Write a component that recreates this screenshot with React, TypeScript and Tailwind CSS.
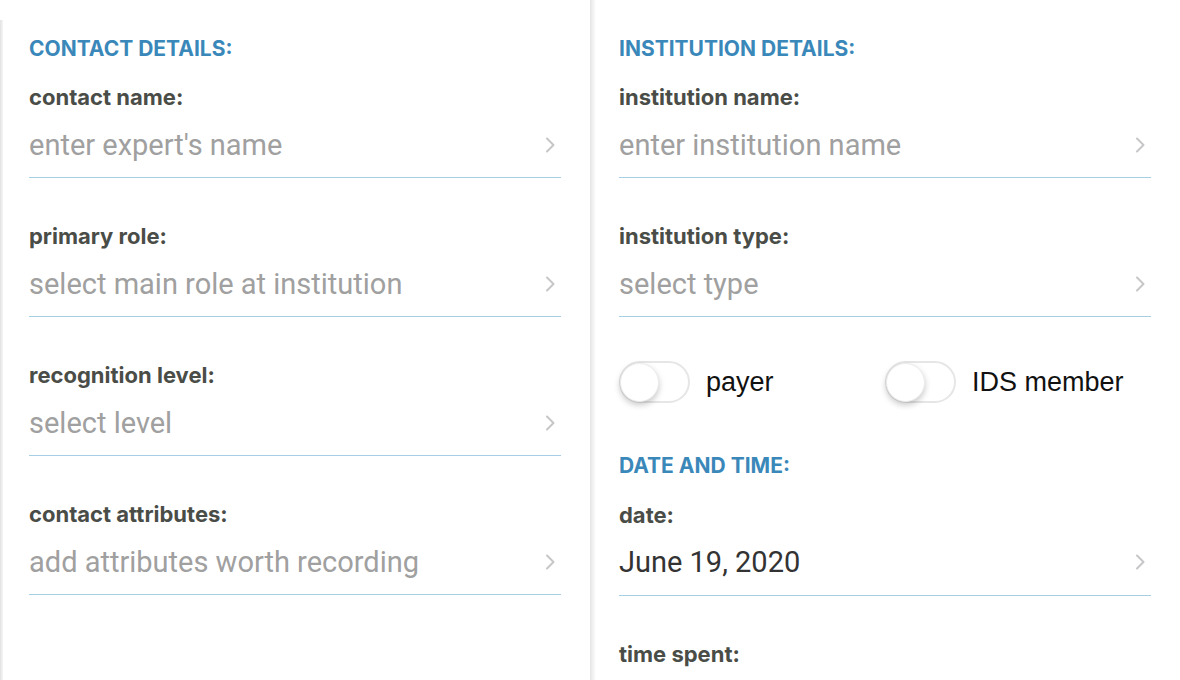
import React from "react";

const Chevron = () => (
  <svg width="12" height="18" viewBox="0 0 12 18" fill="none">
    <path d="M3 2.5 L9.5 9 L3 15.5" stroke="#c6c6c8" strokeWidth="2" strokeLinecap="round" strokeLinejoin="round" />
  </svg>
);

const Heading = ({ children, className = "" }: { children: React.ReactNode; className?: string }) => (
  <div className={`text-[21px] leading-[24px] font-bold text-[#3a88b9] ${className}`} style={{ fontFamily: "Inter, sans-serif" }}>
    {children}
  </div>
);

const Label = ({ children, className = "" }: { children: React.ReactNode; className?: string }) => (
  <div className={`text-[22px] leading-[26px] font-bold text-[#4a4d47] ${className}`} style={{ fontFamily: "Inter, sans-serif" }}>
    {children}
  </div>
);

const Field = ({ label, value, filled = false, className = "" }: { label: string; value: string; filled?: boolean; className?: string }) => (
  <div className={className}>
    <Label>{label}</Label>
    <div className="mt-[18px] flex items-center justify-between pb-[15px] border-b border-[#a6cfe4]">
      <span
        className={`text-[29px] leading-[34px] ${filled ? "text-[#333333]" : "text-[#a0a0a0]"}`}
        style={{ fontFamily: "Roboto, sans-serif" }}
      >
        {value}
      </span>
      <span className="mr-[5px] flex items-center">
        <Chevron />
      </span>
    </div>
  </div>
);

const Toggle = ({ label }: { label: string }) => (
  <div className="flex items-center">
    <div className="relative w-[71px] h-[42px] rounded-full border-2 border-[#e6e6e6] bg-white">
      <div className="absolute left-[-1px] top-[0px] w-[39px] h-[39px] rounded-full bg-white shadow-[0_3px_6px_rgba(0,0,0,0.22)] border border-[#ececec]" />
    </div>
    <span className="ml-[16px] text-[27px] leading-[32px] text-[#111]" style={{ fontFamily: "'Liberation Sans', Arial, sans-serif" }}>
      {label}
    </span>
  </div>
);

export default function App() {
  return (
    <div className="w-[1180px] h-[680px] overflow-hidden bg-white flex">
      <div className="w-[3px] mt-[20px] bg-gradient-to-r from-[#e2e2e2] to-[#f6f6f6]" />
      <div className="w-[587px] pl-[26px] pr-[29px] shrink-0">
        <Heading className="mt-[37px]">CONTACT DETAILS:</Heading>
        <Field className="mt-[23px]" label="contact name:" value="enter expert's name" />
        <Field className="mt-[45px]" label="primary role:" value="select main role at institution" />
        <Field className="mt-[45px]" label="recognition level:" value="select level" />
        <Field className="mt-[45px]" label="contact attributes:" value="add attributes worth recording" />
      </div>
      <div className="w-[6px] shrink-0 bg-gradient-to-r from-[#e4e4e4] to-white" />
      <div className="w-[561px] pl-[23px] pr-[6px] shrink-0">
        <Heading className="mt-[37px]">INSTITUTION DETAILS:</Heading>
        <Field className="mt-[23px]" label="institution name:" value="enter institution name" />
        <Field className="mt-[45px]" label="institution type:" value="select type" />
        <div className="mt-[44px] flex items-center">
          <div className="w-[266px]">
            <Toggle label="payer" />
          </div>
          <Toggle label="IDS member" />
        </div>
        <Heading className="mt-[51px]">DATE AND TIME:</Heading>
        <div className="mt-[24px]">
          <Label>date:</Label>
          <div className="mt-[17px] flex items-center justify-between pb-[16px] border-b border-[#a6cfe4]">
            <span className="text-[29px] leading-[34px] text-[#333333]" style={{ fontFamily: "Roboto, sans-serif" }}>
              June 19, 2020
            </span>
            <span className="mr-[5px] flex items-center">
              <Chevron />
            </span>
          </div>
        </div>
        <Label className="mt-[45px]">time spent:</Label>
      </div>
    </div>
  );
}
